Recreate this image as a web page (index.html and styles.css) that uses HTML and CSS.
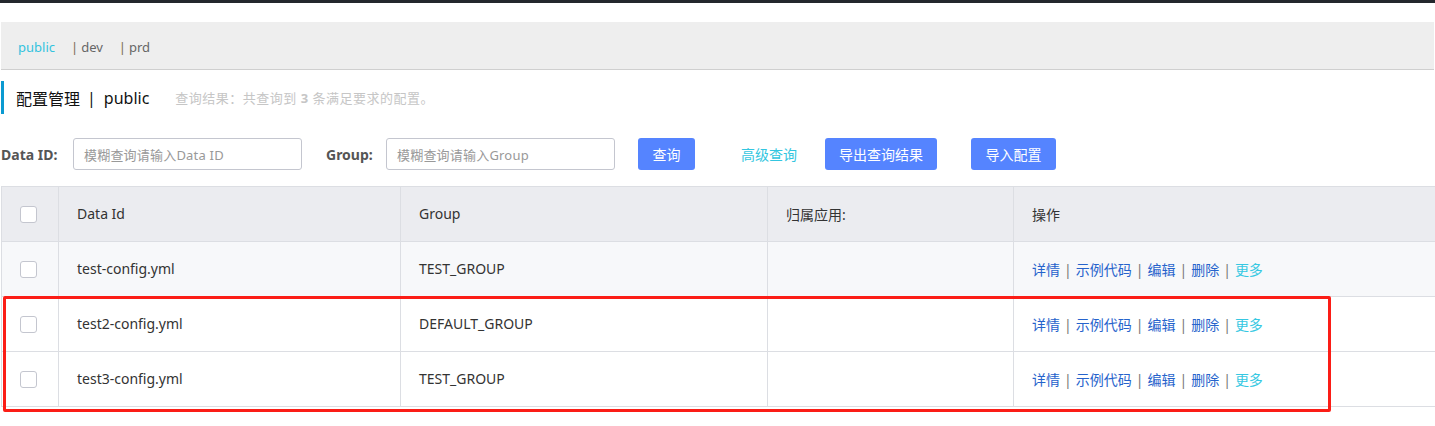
FILE: index.html
```html
<!DOCTYPE html>
<html lang="zh-CN">
<head>
<meta charset="utf-8">
<title>配置管理</title>
<link rel="stylesheet" href="styles.css">
</head>
<body>
<div class="topbar"></div>
<div class="page">
  <div class="env-bar">
    <span class="tab active">public</span>
    <span class="tab"><span class="tab-sep">|</span>dev</span>
    <span class="tab"><span class="tab-sep">|</span>prd</span>
  </div>

  <div class="title-block">
    <span class="title">配置管理</span>
    <span class="title-sep">|</span>
    <span class="title">public</span>
    <span class="hint">查询结果：共查询到 <b>3</b> 条满足要求的配置。</span>
  </div>

  <div class="search-row">
    <label class="label label-id">Data ID:</label>
    <div class="input"><span class="placeholder">模糊查询请输入Data ID</span></div>
    <label class="label label-group">Group:</label>
    <div class="input"><span class="placeholder">模糊查询请输入Group</span></div>
    <button class="btn btn-query">查询</button>
    <a class="adv-link">高级查询</a>
    <button class="btn btn-export">导出查询结果</button>
    <button class="btn btn-import">导入配置</button>
  </div>

  <table class="grid">
    <colgroup>
      <col class="c-check">
      <col class="c-id">
      <col class="c-group">
      <col class="c-app">
      <col class="c-ops">
    </colgroup>
    <thead>
      <tr>
        <th><span class="checkbox"></span></th>
        <th>Data Id</th>
        <th>Group</th>
        <th>归属应用:</th>
        <th>操作</th>
      </tr>
    </thead>
    <tbody>
      <tr class="hover">
        <td><span class="checkbox"></span></td>
        <td>test-config.yml</td>
        <td>TEST_GROUP</td>
        <td></td>
        <td class="ops"><a>详情</a><span class="sep">|</span><a>示例代码</a><span class="sep">|</span><a>编辑</a><span class="sep">|</span><a>删除</a><span class="sep">|</span><a class="more">更多</a></td>
      </tr>
      <tr>
        <td><span class="checkbox"></span></td>
        <td>test2-config.yml</td>
        <td>DEFAULT_GROUP</td>
        <td></td>
        <td class="ops"><a>详情</a><span class="sep">|</span><a>示例代码</a><span class="sep">|</span><a>编辑</a><span class="sep">|</span><a>删除</a><span class="sep">|</span><a class="more">更多</a></td>
      </tr>
      <tr>
        <td><span class="checkbox"></span></td>
        <td>test3-config.yml</td>
        <td>TEST_GROUP</td>
        <td></td>
        <td class="ops"><a>详情</a><span class="sep">|</span><a>示例代码</a><span class="sep">|</span><a>编辑</a><span class="sep">|</span><a>删除</a><span class="sep">|</span><a class="more">更多</a></td>
      </tr>
    </tbody>
  </table>

  <div class="annotation"></div>
</div>
</body>
</html>
```

FILE: styles.css
```css
* { box-sizing: border-box; }

html, body {
  margin: 0;
  padding: 0;
  background: #fff;
}

body {
  font-family: "Noto Sans", "Noto Sans CJK SC", sans-serif;
  color: #333;
  font-size: 14px;
  width: 1435px;
  height: 426px;
  overflow: hidden;
}

.topbar {
  height: 3px;
  background: #23272d;
}

.page {
  position: relative;
  padding: 19px 0 0 1px;
}

/* environment tabs */
.env-bar {
  height: 48px;
  margin-right: 1px;
  background: #eeeeee;
  border-bottom: 1px solid #cfcfcf;
  display: flex;
  align-items: center;
  padding: 2px 0 0 17px;
  font-size: 13px;
  color: #666;
}

.tab { line-height: 20px; }
.tab.active { color: #33c3de; }
.tab + .tab { margin-left: 16px; }
.tab-sep { margin-right: 3px; color: #7a6a55; }

/* title */
.title-block {
  margin-top: 11px;
  height: 33px;
  border-left: 3px solid #0b9ad1;
  display: flex;
  align-items: center;
  padding-left: 12px;
}

.title {
  font-size: 16px;
  color: #111;
}

.title-sep {
  font-size: 16px;
  margin: 0 8px 0 7px;
  color: #111;
}

.hint {
  margin-left: 26px;
  font-size: 13px;
  letter-spacing: 0.5px;
  color: #c6c6c6;
}

.hint b { font-weight: 700; }

/* search row */
.search-row {
  margin-top: 24px;
  height: 32px;
  display: flex;
  align-items: center;
}

.label {
  font-weight: 700;
  font-size: 14px;
  color: #555;
}

.label-id { width: 72px; }
.label-group { width: 60px; margin-left: 24px; }

.input {
  width: 229px;
  height: 32px;
  border: 1px solid #c4c6cf;
  border-radius: 3px;
  display: flex;
  align-items: center;
  padding-left: 10px;
}

.placeholder {
  font-size: 13px;
  letter-spacing: 0.2px;
  color: #999;
}

.btn {
  height: 32px;
  border: none;
  border-radius: 3px;
  background: #5584ff;
  color: #fff;
  font-family: inherit;
  font-size: 14px;
  padding: 0;
}

.btn-query { width: 57px; margin-left: 23px; }
.btn-export { width: 112px; margin-left: 28px; }
.btn-import { width: 85px; margin-left: 34px; }

.adv-link {
  margin-left: 46px;
  color: #33c6e0;
  font-size: 14px;
}

/* table */
.grid {
  margin-top: 16px;
  width: 1436px;
  border-collapse: collapse;
  table-layout: fixed;
}

.c-check { width: 57px; }
.c-id { width: 342px; }
.c-group { width: 367px; }
.c-app { width: 246px; }

.grid th,
.grid td {
  height: 55px;
  border: 1px solid #dcdee3;
  padding: 0 0 1px 18px;
  text-align: left;
  font-weight: 400;
  font-size: 14px;
  color: #333;
  vertical-align: middle;
}

.grid tr > :last-child { border-right: none; }

.grid th { background: #ebecf0; }
.grid tr.hover td { background: #f7f8fa; }

.checkbox {
  display: block;
  width: 17px;
  height: 17px;
  border: 1px solid #c4c6cf;
  border-radius: 3px;
  background: #fff;
  margin-top: 1px;
}

.ops a { color: #2663cc; }
.ops a.more { color: #36c8e2; }
.ops .sep {
  margin: 0 4px;
  color: #777;
}

/* red annotation box */
.annotation {
  position: absolute;
  left: 3px;
  top: 293px;
  width: 1328px;
  height: 116px;
  border: 3px solid #fb1d16;
  border-radius: 2px;
}
```
